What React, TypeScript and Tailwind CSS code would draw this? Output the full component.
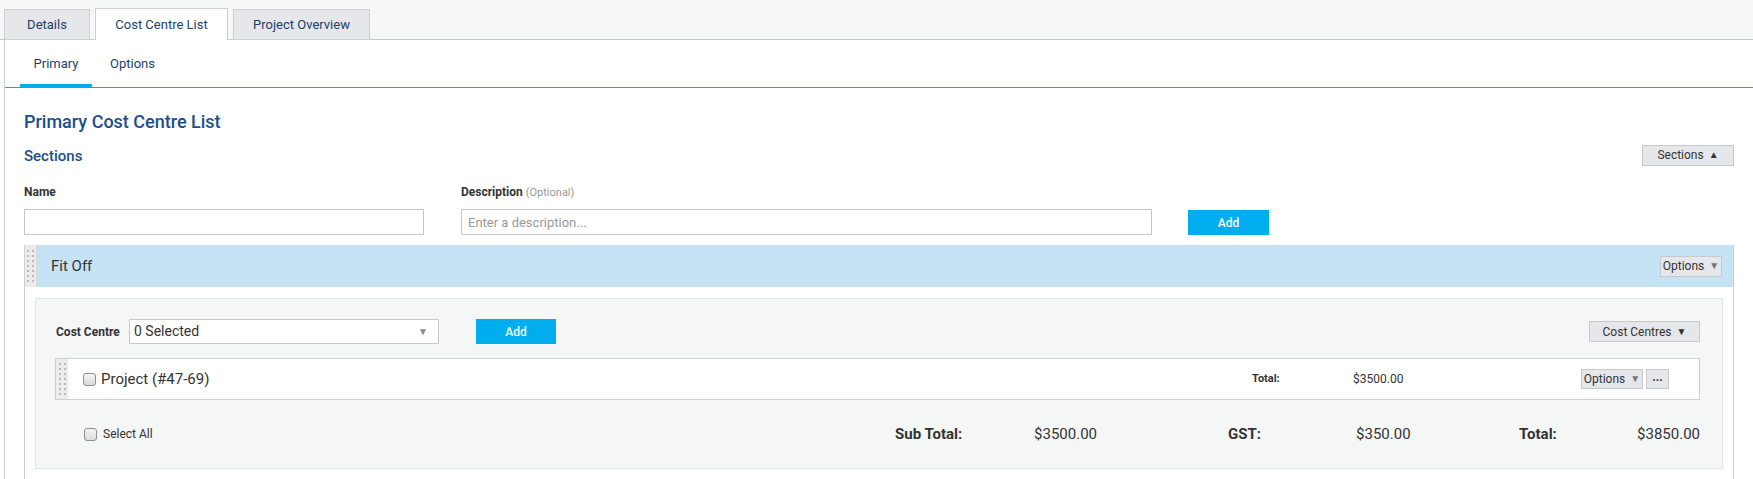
import React from 'react';

const font = "font-['Roboto','Liberation_Sans',sans-serif]";

const Handle: React.FC<{ rows: number; className?: string }> = ({ rows, className = '' }) => (
  <div className={`flex items-center justify-center bg-[#ececec] ${className}`}>
    <div className="grid grid-cols-2 gap-x-[3px] gap-y-[3px]">
      {Array.from({ length: rows * 2 }).map((_, i) => (
        <span key={i} className="block w-[2px] h-[2px] bg-[#b9b9b9]" />
      ))}
    </div>
  </div>
);

const Checkbox: React.FC = () => (
  <span className="block w-[13px] h-[13px] rounded-[3px] border border-[#8e8e8e] bg-gradient-to-b from-[#f4f4f4] to-[#dcdcdc]" />
);

const GrayButton: React.FC<{ label: string; arrow?: string; arrowColor?: string; className?: string }> = ({
  label,
  arrow,
  arrowColor = 'text-[#333]',
  className = '',
}) => (
  <button
    className={`flex items-center justify-center gap-[5px] bg-[#e6e7ea] border border-[#c9c9c9] text-[12px] text-[#333] ${className}`}
  >
    <span>{label}</span>
    {arrow && <span className={`text-[10px] leading-none ${arrowColor}`}>{arrow}</span>}
  </button>
);

export default function App() {
  return (
    <div className={`w-[1753px] h-[479px] overflow-hidden bg-white ${font}`}>
      {/* Top tabs */}
      <div className="h-[40px] bg-[#f6f7f7] flex items-end pl-[4px] gap-[5px] border-b border-[#c9c9c9]">
        <div className="w-[86px] h-[31px] -mb-px flex items-center justify-center bg-[#e6e7ea] border border-[#cfcfcf] text-[13px] text-[#1d3f6e]">
          Details
        </div>
        <div className="w-[133px] h-[32px] -mb-px flex items-center justify-center bg-white border border-b-0 border-[#cfcfcf] text-[13px] text-[#1d3f6e]">
          Cost Centre List
        </div>
        <div className="w-[137px] h-[31px] -mb-px flex items-center justify-center bg-[#e6e7ea] border border-[#cfcfcf] text-[13px] text-[#1d3f6e]">
          Project Overview
        </div>
      </div>

      <div className="ml-[4px] border-l border-[#cfcfcf] h-[439px]">
        {/* Sub tabs */}
        <div className="h-[48px] flex items-stretch pl-[15px] gap-[4px] border-b border-[#00aeef]">
          <div className="relative w-[72px] flex items-center justify-center text-[13px] text-[#1d3f6e]">
            Primary
            <span className="absolute left-0 right-0 -bottom-px h-[4px] bg-[#00aeef]" />
          </div>
          <div className="w-[73px] flex items-center justify-center text-[13px] text-[#1d3f6e]">Options</div>
        </div>

        <div className="px-[19px]">
          <h1 className="mt-[21px] h-[24px] flex items-center text-[18px] font-medium text-[#1b4f8c]">
            Primary Cost Centre List
          </h1>
          <div className="mt-[12px] h-[22px] flex items-center justify-between">
            <h2 className="text-[15px] font-medium text-[#1b4f8c]">Sections</h2>
            <GrayButton label="Sections" arrow="▲" className="w-[92px] h-[21px] -mt-[2px]" />
          </div>

          {/* Add section form */}
          <div className="mt-[16px] flex items-end">
            <div className="w-[400px]">
              <div className="h-[16px] text-[12px] font-bold text-[#333]">Name</div>
              <input className="mt-[10px] w-full h-[26px] border border-[#c9c9c9] px-[6px] text-[13px] outline-none" />
            </div>
            <div className="ml-[37px] w-[691px]">
              <div className="h-[16px] text-[12px] text-[#333]">
                <span className="font-bold">Description</span>{' '}
                <span className="text-[11px] text-[#999]">(Optional)</span>
              </div>
              <input
                placeholder="Enter a description..."
                className="mt-[10px] w-full h-[26px] border border-[#c9c9c9] px-[6px] text-[13px] placeholder:text-[#999] outline-none"
              />
            </div>
            <button className="ml-[36px] w-[81px] h-[25px] bg-[#00aeef] text-white text-[12px] font-medium">Add</button>
          </div>

          {/* Section box */}
          <div className="mt-[10px] border border-[#cfcfcf] h-[240px]">
            <div className="h-[42px] flex items-stretch bg-[#c6e2f5] -mt-px">
              <Handle rows={7} className="w-[12px] border-r border-[#d7d7d7]" />
              <div className="ml-[14px] flex items-center text-[15px] text-[#333]">Fit Off</div>
              <div className="ml-auto mr-[11px] flex items-center">
                <GrayButton label="Options" arrow="▼" arrowColor="text-[#777]" className="w-[62px] h-[21px]" />
              </div>
            </div>

            <div className="mt-[11px] mx-[10px] bg-[#f5f7f7] border border-[#e4e4e4] px-[19px] pr-[22px]">
              <div className="mt-[20px] h-[25px] flex items-center">
                <span className="ml-[1px] w-[73px] text-[12px] font-bold text-[#333]">Cost Centre</span>
                <div className="w-[310px] h-[25px] bg-white border border-[#c9c9c9] flex items-center justify-between px-[4px] pr-[10px]">
                  <span className="text-[14px] text-[#333]">0 Selected</span>
                  <span className="text-[10px] text-[#888]">▼</span>
                </div>
                <button className="ml-[37px] w-[80px] h-[25px] bg-[#00aeef] text-white text-[12px] font-medium">Add</button>
                <GrayButton label="Cost Centres" arrow="▼" className="ml-auto w-[111px] h-[21px]" />
              </div>

              <div className="mt-[14px] h-[42px] bg-white border border-[#cfcfcf] flex items-stretch">
                <Handle rows={7} className="w-[12px]" />
                <div className="ml-[15px] flex items-center gap-[5px]">
                  <Checkbox />
                  <span className="text-[15px] text-[#333]">Project (#47-69)</span>
                </div>
                <div className="ml-auto flex items-center pr-[30px]">
                  <span className="w-[101px] text-[11px] font-bold text-[#333]">Total:</span>
                  <span className="w-[228px] text-[12px] text-[#333]">$3500.00</span>
                  <GrayButton label="Options" arrow="▼" arrowColor="text-[#777]" className="w-[62px] h-[20px]" />
                  <button className="ml-[3px] w-[23px] h-[20px] bg-[#e6e7ea] border border-[#c9c9c9] text-[12px] font-bold text-[#333] leading-none pb-[4px]">
                    ...
                  </button>
                </div>
              </div>

              <div className="h-[68px] flex items-center">
                <div className="ml-[29px] flex items-center gap-[6px]">
                  <Checkbox />
                  <span className="text-[12px] text-[#333]">Select All</span>
                </div>
                <div className="ml-auto flex items-center text-[15px] text-[#333]">
                  <span className="w-[139px] font-bold">Sub Total:</span>
                  <span className="w-[194px]">$3500.00</span>
                  <span className="w-[128px] font-bold">GST:</span>
                  <span className="w-[163px]">$350.00</span>
                  <span className="w-[118px] font-bold">Total:</span>
                  <span>$3850.00</span>
                </div>
              </div>
            </div>
          </div>
        </div>
      </div>
    </div>
  );
}
